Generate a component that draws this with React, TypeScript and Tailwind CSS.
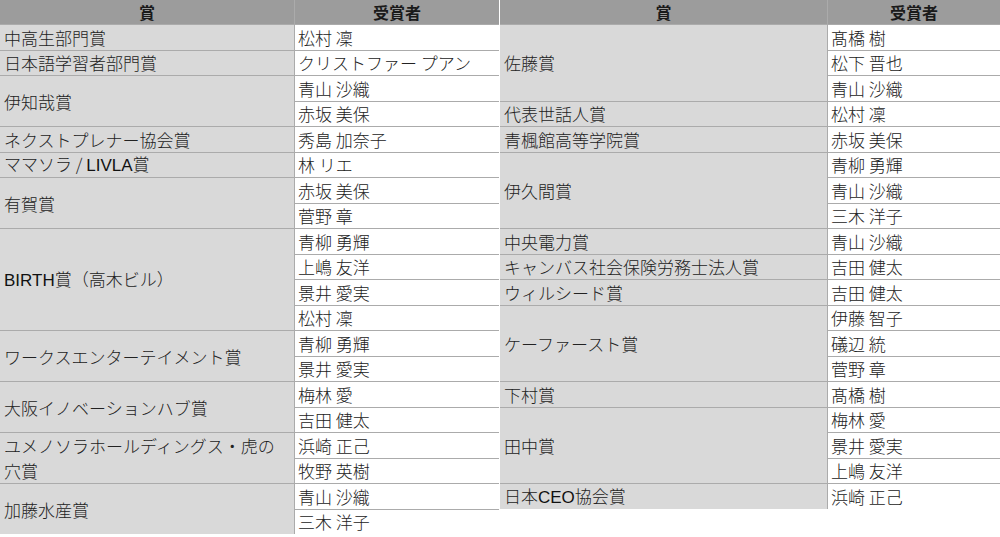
import React from "react";

type Group = { award: React.ReactNode; people: string[] };

const latin = "font-['Liberation_Sans'] font-normal text-[#111]";

const left: Group[] = [
  { award: "中高生部門賞", people: ["松村 凜"] },
  { award: "日本語学習者部門賞", people: ["クリストファー プアン"] },
  { award: "伊知哉賞", people: ["青山 沙織", "赤坂 美保"] },
  { award: "ネクストプレナー協会賞", people: ["秀島 加奈子"] },
  {
    award: (
      <>
        ママソラ / <span className={latin}>LIVLA</span>賞
      </>
    ),
    people: ["林 リエ"],
  },
  { award: "有賀賞", people: ["赤坂 美保", "菅野 章"] },
  {
    award: (
      <>
        <span className={latin}>BIRTH</span>賞（高木ビル）
      </>
    ),
    people: ["青柳 勇輝", "上嶋 友洋", "景井 愛実", "松村 凜"],
  },
  { award: "ワークスエンターテイメント賞", people: ["青柳 勇輝", "景井 愛実"] },
  { award: "大阪イノベーションハブ賞", people: ["梅林 愛", "吉田 健太"] },
  { award: "ユメノソラホールディングス・虎の穴賞", people: ["浜崎 正己", "牧野 英樹"] },
  { award: "加藤水産賞", people: ["青山 沙織", "三木 洋子"] },
];

const right: Group[] = [
  { award: "佐藤賞", people: ["髙橋 樹", "松下 晋也", "青山 沙織"] },
  { award: "代表世話人賞", people: ["松村 凜"] },
  { award: "青楓館高等学院賞", people: ["赤坂 美保"] },
  { award: "伊久間賞", people: ["青柳 勇輝", "青山 沙織", "三木 洋子"] },
  { award: "中央電力賞", people: ["青山 沙織"] },
  { award: "キャンバス社会保険労務士法人賞", people: ["吉田 健太"] },
  { award: "ウィルシード賞", people: ["吉田 健太"] },
  { award: "ケーファースト賞", people: ["伊藤 智子", "礒辺 統", "菅野 章"] },
  { award: "下村賞", people: ["髙橋 樹"] },
  { award: "田中賞", people: ["梅林 愛", "景井 愛実", "上嶋 友洋"] },
  {
    award: (
      <>
        日本<span className={latin}>CEO</span>協会賞
      </>
    ),
    people: ["浜崎 正己"],
  },
];

const spanClass: Record<number, string> = {
  1: "row-span-1",
  2: "row-span-2",
  3: "row-span-3",
  4: "row-span-4",
};

function Table({ groups, cols, rows }: { groups: Group[]; cols: string; rows: string }) {
  return (
    <div className={`grid ${cols} ${rows} gap-px bg-[#ababab] self-start`}>
      <div className="col-start-1 bg-[#9c9c9c] flex items-center justify-center text-[16px] font-bold text-[#1a1a1a]">
        賞
      </div>
      <div className="col-start-2 bg-[#9c9c9c] flex items-center justify-center text-[16px] font-bold text-[#1a1a1a]">
        受賞者
      </div>
      {groups.map((g, i) => (
        <React.Fragment key={i}>
          <div
            className={`col-start-1 ${spanClass[g.people.length]} bg-[#d9d9d9] flex items-center pl-[4px] pr-[4px] leading-[25px]`}
          >
            <span>{g.award}</span>
          </div>
          {g.people.map((p, j) => (
            <div key={j} className="col-start-2 bg-white flex items-center pl-[3px] whitespace-nowrap">
              {p}
            </div>
          ))}
        </React.Fragment>
      ))}
    </div>
  );
}

export default function App() {
  return (
    <div className="w-[1000px] h-[537px] bg-white overflow-hidden flex gap-px font-['Noto_Sans_CJK_JP','Noto_Sans',sans-serif] font-light text-[17px] text-[#222]">
      <Table
        groups={left}
        cols="grid-cols-[294px_204px]"
        rows="grid-rows-[24px_repeat(20,24.5px)]"
      />
      <Table
        groups={right}
        cols="grid-cols-[327px_172px]"
        rows="grid-rows-[24px_repeat(19,24.5px)]"
      />
    </div>
  );
}
